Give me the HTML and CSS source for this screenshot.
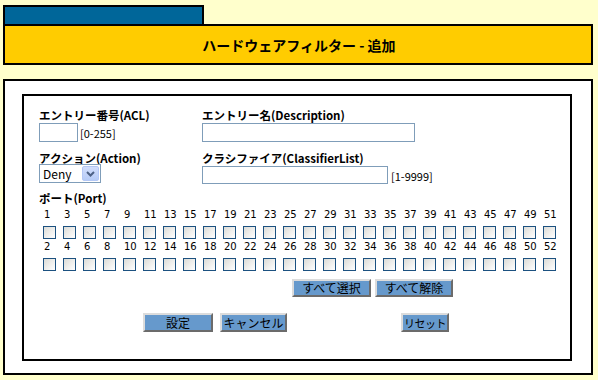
FILE: index.html
```html
<!DOCTYPE html>
<html lang="ja">
<head>
<meta charset="utf-8">
<title>ハードウェアフィルター - 追加</title>
<link rel="stylesheet" href="styles.css">
</head>
<body>
<div class="page">
  <div class="tab"></div>
  <div class="title">ハードウェアフィルター - 追加</div>
  <div class="outer">
    <div class="inner">
      <div class="fields">
        <div class="field">
          <div class="label">エントリー番号(ACL)</div>
          <div class="control">
            <input class="text acl" type="text">
            <span class="range">[0-255]</span>
          </div>
        </div>
        <div class="field">
          <div class="label">エントリー名(Description)</div>
          <div class="control">
            <input class="text desc" type="text">
          </div>
        </div>
        <div class="field field-second">
          <div class="label">アクション(Action)</div>
          <div class="control">
            <div class="select">
              <span class="select-value">Deny</span>
              <span class="select-btn"><svg width="11" height="8" viewBox="0 0 11 8"><path d="M2 2 L5.5 5.5 L9 2" fill="none" stroke="#4d6185" stroke-width="2"/></svg></span>
            </div>
          </div>
        </div>
        <div class="field field-second">
          <div class="label">クラシファイア(ClassifierList)</div>
          <div class="control">
            <input class="text classifier" type="text">
            <span class="range range-wide">[1-9999]</span>
          </div>
        </div>
      </div>

      <div class="label port-label">ポート(Port)</div>
      <div class="ports" id="ports"></div>

      <div class="btn-row select-row">
        <button class="btn w-all">すべて選択</button>
        <button class="btn w-none">すべて解除</button>
      </div>
      <div class="btn-row action-row">
        <button class="btn w-set">設定</button>
        <button class="btn w-cancel">キャンセル</button>
        <button class="btn w-reset">リセット</button>
      </div>
    </div>
  </div>
</div>
<script src="script.js"></script>
</body>
</html>
```

FILE: script.js
```js
(function () {
  var ports = document.getElementById('ports');
  var html = '';
  var r, i;
  for (r = 0; r < 2; r++) {
    for (i = 0; i < 26; i++) {
      html += '<span class="num">' + (i * 2 + 1 + r) + '</span>';
    }
    for (i = 0; i < 26; i++) {
      html += '<span class="cb-cell"><input type="checkbox" class="cb"></span>';
    }
  }
  ports.innerHTML = html;
})();
```

FILE: styles.css
```css
html, body {
  margin: 0;
  padding: 0;
  background: #ffffcc;
}
body {
  font-family: "Noto Sans CJK JP", "DejaVu Sans", sans-serif;
  font-size: 12px;
  color: #000;
}
.page {
  width: 590px;
  padding: 5px 0 0 3px;
}
.tab {
  width: 197px;
  height: 17px;
  background: #006699;
  border: 2px solid #000;
  border-bottom: 0;
}
.title {
  box-sizing: border-box;
  height: 41px;
  background: #ffcc00;
  border: 2px solid #000;
  display: flex;
  align-items: center;
  justify-content: center;
  font-size: 14px;
  font-weight: bold;
  padding-left: 2px;
}
.outer {
  box-sizing: border-box;
  margin-top: 14px;
  height: 296px;
  border: 2px solid #000;
  background: #fff;
  padding: 13px 19px 0 17px;
}
.inner {
  box-sizing: border-box;
  width: 550px;
  height: 267px;
  border: 2px solid #000;
  padding: 13px 0 0 15px;
}
.fields {
  display: grid;
  grid-template-columns: 163px auto;
}
.label {
  font-weight: bold;
  font-size: 11.5px;
  line-height: 12px;
  height: 12px;
  white-space: nowrap;
}
.field .label {
  margin-bottom: 2px;
}
.field-second {
  margin-top: 10px;
}
.field-second .label {
  margin-bottom: 0;
}
.control {
  display: flex;
  align-items: center;
  height: 19px;
}
.text {
  box-sizing: border-box;
  height: 19px;
  border: 1px solid #7f9db9;
  background: #fff;
  margin: 0;
  padding: 0 2px;
  font: inherit;
}
.acl { width: 39px; }
.desc { width: 213px; }
.classifier { width: 186px; margin-top: 2px; height: 18px; }
.range {
  font-size: 11px;
  margin-left: 2px;
  line-height: 12px;
}
.range-wide { margin-left: 3px; margin-top: 4px; }
.select {
  box-sizing: border-box;
  width: 62px;
  height: 19px;
  border: 1px solid #7f9db9;
  background: #fff;
  display: flex;
  align-items: center;
  padding: 1px;
}
.select-value {
  flex: 1;
  padding-left: 2px;
  font-size: 12px;
  line-height: 15px;
}
.select-btn {
  box-sizing: border-box;
  width: 17px;
  height: 15px;
  background: linear-gradient(#d2defc, #b6cbf7);
  border: 1px solid #b4c8f6;
  border-radius: 2px;
  display: flex;
  align-items: center;
  justify-content: center;
}
.port-label {
  margin-top: 9px;
}
.ports {
  margin-top: 4px;
  display: grid;
  grid-template-columns: repeat(26, 20px);
  grid-template-rows: 14px 18px 14px 18px;
}
.num {
  font-family: "DejaVu Sans", sans-serif;
  font-size: 10px;
  line-height: 14px;
  padding-left: 5px;
  white-space: nowrap;
}
.cb-cell {
  padding: 4px 0 0 4px;
}
.cb {
  appearance: none;
  -webkit-appearance: none;
  box-sizing: border-box;
  display: block;
  width: 13px;
  height: 13px;
  margin: 0;
  border: 1px solid #1c5180;
  background: linear-gradient(135deg, #dcdcd7, #ffffff);
}
.btn-row {
  display: flex;
}
.select-row {
  margin-top: 7px;
  padding-left: 253px;
  gap: 4px;
}
.action-row {
  margin-top: 16px;
  padding-left: 104px;
}
.btn {
  box-sizing: border-box;
  height: 18px;
  margin: 0;
  padding: 0;
  background: #6699cc;
  border: 2px solid;
  border-color: #dcdcdc #6b6b6b #6b6b6b #dcdcdc;
  font-family: "Noto Sans CJK JP", sans-serif;
  font-size: 12px;
  line-height: 12px;
  color: #000;
  white-space: nowrap;
}
.action-row .btn { height: 19px; }
.w-all { width: 79px; }
.w-none { width: 78px; }
.w-set { width: 70px; }
.w-cancel { width: 67px; margin-left: 7px; }
.w-reset { width: 48px; margin-left: 114px; font-size: 11px; letter-spacing: -0.5px; }
```
